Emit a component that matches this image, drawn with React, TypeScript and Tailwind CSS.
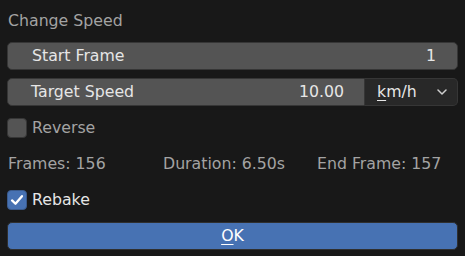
import React from "react";

const Check = () => (
  <svg viewBox="0 0 20 20" className="w-[20px] h-[20px]">
    <path
      d="M4.5 10.5 L8.3 14.2 L15.5 5.8"
      fill="none"
      stroke="white"
      strokeWidth="2.6"
      strokeLinecap="round"
      strokeLinejoin="round"
    />
  </svg>
);

const Chevron = () => (
  <svg viewBox="0 0 10 6" className="w-[10px] h-[6px]">
    <path d="M1 1 L5 5 L9 1" fill="none" stroke="#cfcfcf" strokeWidth="1.5" strokeLinecap="round" strokeLinejoin="round" />
  </svg>
);

const App = () => {
  return (
    <div className="w-[465px] h-[256px] bg-[#181818] px-[7px] pt-[11px] font-['DejaVu_Sans',sans-serif] text-[15.75px] overflow-hidden">
      <div className="h-[20px] leading-[20px] pl-[1px] text-[#a3a3a3]">Change Speed</div>

      <div className="mt-[11px] h-[28px] rounded-[5px] border border-[#363636] bg-[#545454] flex items-center justify-between pl-[24px] pr-[21px] text-[#e6e6e6]">
        <span>Start Frame</span>
        <span>1</span>
      </div>

      <div className="mt-[8px] h-[28px] flex">
        <div className="w-[358px] rounded-l-[5px] border border-[#363636] bg-[#545454] flex items-center justify-between pl-[23px] pr-[20px] text-[#e6e6e6]">
          <span>Target Speed</span>
          <span>10.00</span>
        </div>
        <div className="flex-1 rounded-r-[5px] border border-l-0 border-[#363636] bg-[#282828] flex items-center justify-between pl-[12px] pr-[10px] text-[#e6e6e6]">
          <span>
            <span className="underline underline-offset-[3px]">k</span>m/h
          </span>
          <Chevron />
        </div>
      </div>

      <div className="mt-[12px] h-[20px] flex items-center gap-[5px]">
        <div className="w-[20px] h-[20px] rounded-[4px] border border-[#363636] bg-[#545454]" />
        <span className="text-[#a3a3a3]">Reverse</span>
      </div>

      <div className="mt-[16px] h-[20px] leading-[20px] grid grid-cols-[155px_154px_1fr] pl-[1px] text-[#a3a3a3]">
        <span>Frames: 156</span>
        <span>Duration: 6.50s</span>
        <span>End Frame: 157</span>
      </div>

      <div className="mt-[16px] h-[20px] flex items-center gap-[5px]">
        <div className="w-[20px] h-[20px] rounded-[4px] border border-[#3a5a8c] bg-[#4772b3] flex items-center justify-center">
          <Check />
        </div>
        <span className="text-[#e6e6e6]">Rebake</span>
      </div>

      <div className="mt-[12px] h-[28px] rounded-[5px] border border-[#2f2f2f] bg-[#4772b3] flex items-center justify-center text-white">
        <span>
          <span className="underline underline-offset-[3px]">O</span>K
        </span>
      </div>
    </div>
  );
};

export default App;
